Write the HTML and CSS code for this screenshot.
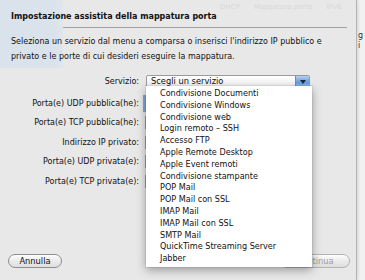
FILE: index.html
```html
<!DOCTYPE html>
<html lang="it">
<head>
    <meta charset="UTF-8">
    <meta name="viewport" content="width=device-width, initial-scale=1.0">
    <title>Mappatura porta</title>
    <link rel="stylesheet" href="styles.css">
</head>
<body>
    <div class="desk">
        <div class="behind"><span>g</span><span>i</span></div>

        <div class="sheet">
            <div class="ghost-tabs">
                <span>DHCP</span>
                <span>Mappatura porte</span>
                <span>IPv6</span>
            </div>

            <h1 class="title">Impostazione assistita della mappatura porta</h1>
            <hr class="rule">
            <p class="intro">Seleziona un servizio dal menu a comparsa o inserisci l'indirizzo IP pubblico e<br>privato e le porte di cui desideri eseguire la mappatura.</p>

            <div class="fields">
                <label class="lbl first">Servizio:</label>
                <div class="popup first">
                    <span class="popup-text">Scegli un servizio</span>
                    <span class="arrow"></span>
                </div>

                <label class="lbl">Porta(e) UDP pubblica(he):</label>
                <div class="field focus"></div>

                <label class="lbl">Porta(e) TCP pubblica(he):</label>
                <div class="field"></div>

                <label class="lbl">Indirizzo IP privato:</label>
                <div class="field"></div>

                <label class="lbl">Porta(e) UDP privata(e):</label>
                <div class="field"></div>

                <label class="lbl">Porta(e) TCP privata(e):</label>
                <div class="field"></div>
            </div>

            <div class="buttons">
                <button class="btn">Annulla</button>
                <button class="btn disabled">Continua</button>
            </div>

            <!-- menu a comparsa aperto -->
            <ul class="menu">
                <li>Condivisione Documenti</li>
                <li>Condivisione Windows</li>
                <li>Condivisione web</li>
                <li>Login remoto – SSH</li>
                <li>Accesso FTP</li>
                <li>Apple Remote Desktop</li>
                <li>Apple Event remoti</li>
                <li>Condivisione stampante</li>
                <li>POP Mail</li>
                <li>POP Mail con SSL</li>
                <li>IMAP Mail</li>
                <li>IMAP Mail con SSL</li>
                <li>SMTP Mail</li>
                <li>QuickTime Streaming Server</li>
                <li>Jabber</li>
            </ul>
        </div>
    </div>
</body>
</html>
```

FILE: styles.css
```css
* {
    box-sizing: border-box;
}

body {
    margin: 0;
    font-family: "DejaVu Sans", sans-serif;
    font-size: 8px;
    color: #111;
    background: #f1f1f1;
}

.desk {
    position: relative;
    width: 365px;
    height: 280px;
    overflow: hidden;
}

.behind {
    position: absolute;
    left: 358px;
    top: 31px;
    display: flex;
    flex-direction: column;
    line-height: 10px;
    color: #333;
}

.sheet {
    position: relative;
    width: 357px;
    height: 280px;
    display: flex;
    flex-direction: column;
    background: #e8e8e8;
    border-right: 1px solid #b3b3b3;
    box-shadow: 1px 0 3px rgba(0, 0, 0, 0.12);
}

.sheet::before {
    content: "";
    position: absolute;
    left: 0;
    top: 0;
    width: 63px;
    height: 68px;
    background: linear-gradient(to right, #dae2eb 85%, #e1e6eb);
}

.ghost-tabs {
    position: absolute;
    top: 3px;
    left: 220px;
    display: flex;
    gap: 14px;
    color: #d8d8d8;
    font-size: 7px;
}

.title {
    position: relative;
    margin: 0;
    padding: 11px 0 0 11px;
    font-size: 8px;
    line-height: 12px;
    font-weight: bold;
}

.rule {
    margin: 4px 9px 0 11px;
    border: 0;
    border-top: 1px solid #a3a3a3;
    height: 0;
}

.intro {
    position: relative;
    margin: 6px 0 0 11px;
    line-height: 15px;
}

.fields {
    display: grid;
    grid-template-columns: 140px 1fr;
    column-gap: 6px;
    row-gap: 6.5px;
    margin-top: 13px;
    grid-auto-rows: 13px;
    align-items: center;
}

.lbl {
    text-align: right;
    padding-right: 1px;
    line-height: 13px;
}

.lbl.first,
.popup.first {
    margin-bottom: 4px;
}

.popup {
    display: flex;
    align-items: center;
    width: 164px;
    height: 13px;
    border: 1px solid #9b9b9b;
    border-radius: 2px;
    background: linear-gradient(#ffffff, #f1f1f1);
    overflow: hidden;
}

.popup-text {
    flex: 1;
    padding-left: 4px;
    line-height: 11px;
    font-size: 8.3px;
}

.arrow {
    width: 14px;
    height: 100%;
    background: linear-gradient(#b5d1f2, #6ea4e4 50%, #5d98dd 51%, #9cc3ef);
    border-left: 1px solid #6f8fb8;
    position: relative;
}

.arrow::after {
    content: "";
    position: absolute;
    left: 4px;
    top: 4px;
    border-left: 3px solid transparent;
    border-right: 3px solid transparent;
    border-top: 4px solid #1c2a3a;
}

.field {
    margin-left: -1px;
    width: 120px;
    height: 13px;
    background: #fff;
    border: 1px solid #a0a0a0;
}

.field.focus {
    box-shadow: 0 0 0 2px #7eaadd;
}

.buttons {
    display: flex;
    margin-top: auto;
    padding: 0 6px 12px 8px;
}

.btn {
    height: 14px;
    padding: 0;
    font: inherit;
    font-size: 8.3px;
    line-height: 12px;
    color: #111;
    border: 1px solid #8e8e8e;
    border-radius: 8px;
    background: linear-gradient(#fdfdfd, #e9e9e9 55%, #dedede);
}

.btn:first-child {
    width: 54px;
}

.btn.disabled {
    width: 70px;
    margin-left: auto;
    color: #9c9c9c;
    border-color: #b4b4b4;
}

.menu {
    position: absolute;
    left: 146px;
    top: 86px;
    width: 166px;
    margin: 0;
    padding: 2px 0;
    list-style: none;
    font-size: 8.1px;
    background: #fff;
    box-shadow: 0 3px 9px rgba(0, 0, 0, 0.35), 0 0 0 1px rgba(0, 0, 0, 0.06);
}

.menu li {
    padding-left: 14px;
    line-height: 11.8px;
    white-space: nowrap;
}
```
